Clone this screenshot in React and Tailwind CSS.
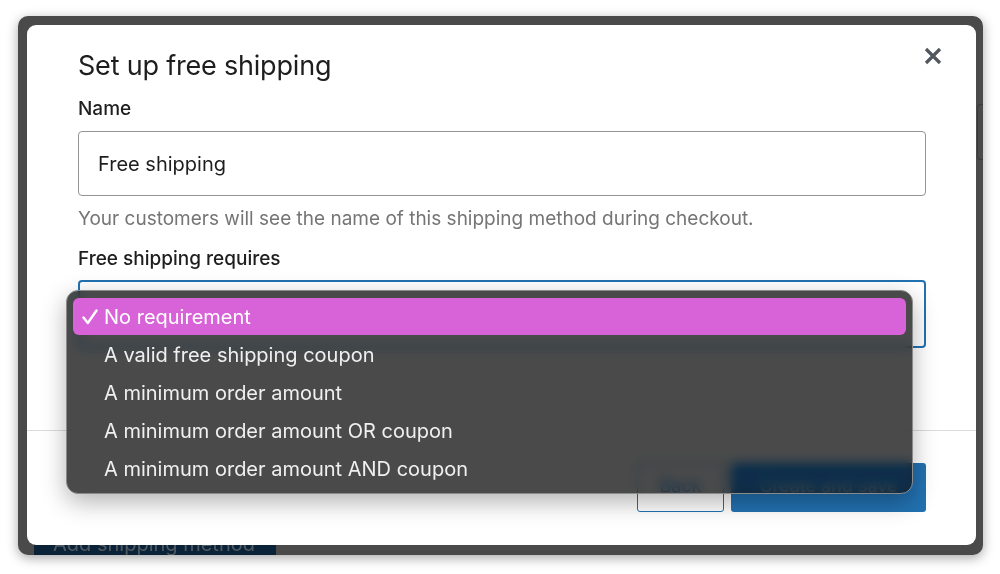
import React from 'react';

const options = [
  'No requirement',
  'A valid free shipping coupon',
  'A minimum order amount',
  'A minimum order amount OR coupon',
  'A minimum order amount AND coupon',
];

const CloseIcon = () => (
  <svg width="18" height="18" viewBox="0 0 18 18" fill="none">
    <path d="M2 2 L16 16 M16 2 L2 16" stroke="#50575e" strokeWidth="3.2" strokeLinecap="butt" />
  </svg>
);

const CheckIcon = () => (
  <svg width="16" height="16" viewBox="0 0 16 16" fill="none">
    <path d="M1.5 8.5 L5.8 14 L14.5 1.5" stroke="white" strokeWidth="2.4" strokeLinecap="round" strokeLinejoin="round" />
  </svg>
);

const Dropdown = () => (
  <div className="absolute left-[39px] top-[265px] w-[847px] h-[204px] rounded-[12px] border border-[#8a8a8a] bg-[rgba(20,20,20,0.77)] backdrop-blur-[6px] backdrop-saturate-200 shadow-[0_8px_24px_rgba(0,0,0,0.3)] pt-[7px] px-[6px]">
    {options.map((opt, i) => (
      <div
        key={opt}
        className={
          i === 0
            ? 'flex items-center h-[37px] mb-[1px] rounded-[6px] bg-[#d862d7] text-white'
            : 'flex items-center h-[38px] text-[#f0f0f0]'
        }
      >
        <span className="w-[31px] pl-[9px] flex items-center">{i === 0 && <CheckIcon />}</span>
        <span className="text-[20px] leading-none">{opt}</span>
      </div>
    ))}
  </div>
);

const App = () => {
  return (
    <div
      className="w-[1000px] h-[574px] bg-white pt-[16px] pl-[18px] overflow-hidden"
      style={{ fontFamily: 'Inter, "Noto Sans", "Liberation Sans", sans-serif' }}
    >
      <div className="relative w-[965px] h-[539px] rounded-[10px] bg-[#4a4a4a] overflow-hidden shadow-[0_3px_12px_rgba(0,0,0,0.35)]">
        {/* page behind the backdrop */}
        <div className="flex flex-col h-full justify-end pl-[16px]">
          <div className="w-[242px] h-[36px] bg-[#0b2338] text-[#505a63] text-[20px] leading-[20px] pl-[19px] pt-[15px]">
            Add shipping method
          </div>
        </div>
        <div className="absolute right-0 top-[88px] w-[6px] h-[56px] rounded-l-[4px] border border-r-0 border-[#3a3a3a]" />

        {/* modal */}
        <div className="absolute left-[9px] top-[9px] w-[949px] h-[520px] rounded-[9px] bg-white">
          <button className="absolute right-[34px] top-[22px]">
            <CloseIcon />
          </button>
          <div className="px-[51px] pt-[24px] pr-[50px]">
            <h1 className="text-[27px] leading-[34px] text-[#1e1e1e] tracking-[-0.2px]">Set up free shipping</h1>
            <div className="mt-[14px] text-[19px] leading-[24px] font-medium text-[#1e1e1e]">Name</div>
            <div className="mt-[10px] h-[65px] rounded-[4px] border border-[#949494] flex items-center pl-[19px] text-[20px] text-[#1e1e1e]">
              Free shipping
            </div>
            <div className="mt-[11px] text-[19px] leading-[24px] text-[#757575]">
              Your customers will see the name of this shipping method during checkout.
            </div>
            <div className="mt-[16px] text-[19px] leading-[24px] font-medium text-[#1e1e1e]">Free shipping requires</div>
            <div className="mt-[9px] h-[68px] rounded-[4px] border-2 border-[#2271b1]" />
          </div>
          <div className="mt-[82px] border-t border-[#dcdcde]" />
          <div className="flex justify-end gap-[7px] pt-[32px] pr-[50px]">
            <button className="w-[87px] h-[49px] rounded-[3px] border border-[#2271b1] bg-white text-[#2271b1] text-[18px] pb-[4px]">
              Back
            </button>
            <button className="w-[195px] h-[49px] rounded-[3px] bg-[#2271b1] text-white text-[18px] pb-[4px]">
              Create and save
            </button>
          </div>
          <Dropdown />
        </div>
      </div>
    </div>
  );
};

export default App;
